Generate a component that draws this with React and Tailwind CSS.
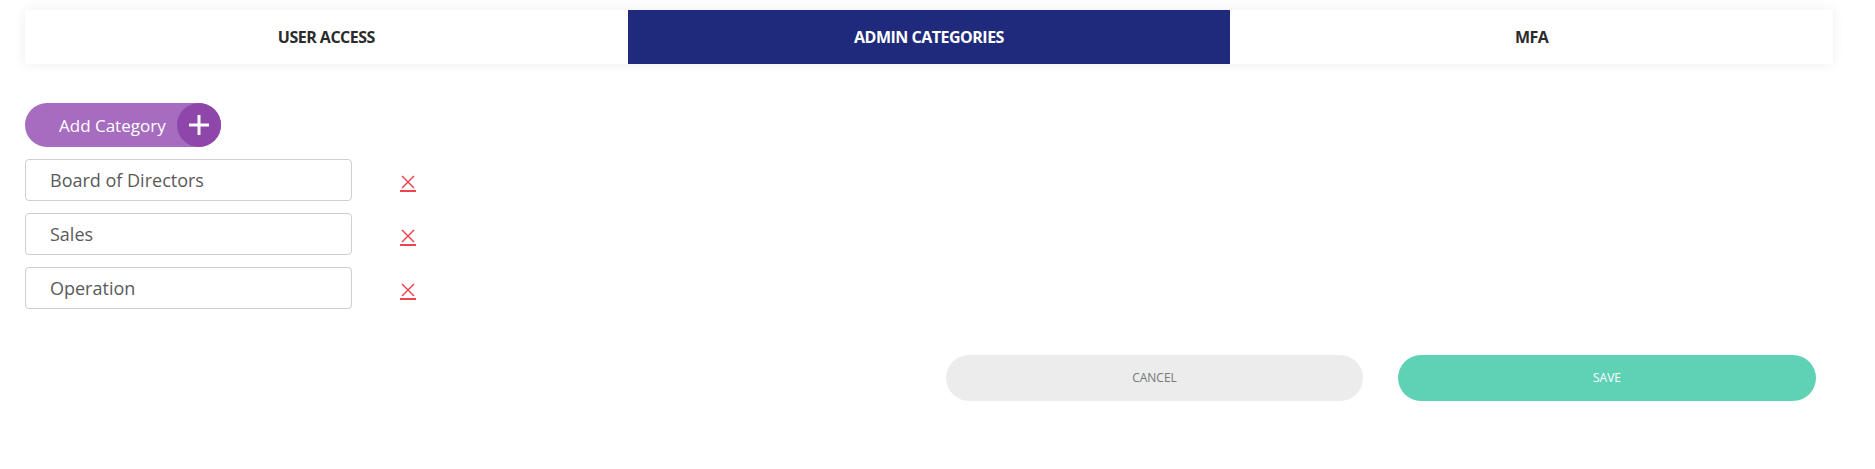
import React from "react";

const categories = ["Board of Directors", "Sales", "Operation"];

function RemoveIcon() {
  return (
    <button type="button" className="flex flex-col items-center w-[16px] mt-[6px]">
      <svg width="16" height="14" viewBox="0 0 16 14" className="block">
        <line x1="2" y1="1" x2="14" y2="13" stroke="#f0434b" strokeWidth="1.4" />
        <line x1="14" y1="1" x2="2" y2="13" stroke="#f0434b" strokeWidth="1.4" />
      </svg>
      <span className="block w-[16px] h-[2px] bg-[#f0434b] mt-[1px]" />
    </button>
  );
}

export default function App() {
  return (
    <div
      className="w-full min-h-[469px] bg-white"
      style={{ fontFamily: '"Open Sans", "Noto Sans", sans-serif' }}
    >
      <div className="px-[25px] pt-[10px] pr-[42px]">
        <div className="flex h-[54px] bg-white shadow-[0_0_12px_rgba(0,0,0,0.07)]">
          <div className="flex-1 flex items-center justify-center text-[16px] font-bold tracking-[-0.5px] text-[#2b2b2b]">
            USER ACCESS
          </div>
          <div className="flex-1 flex items-center justify-center text-[16px] font-bold tracking-[-0.5px] text-white bg-[#1f2a7c]">
            ADMIN CATEGORIES
          </div>
          <div className="flex-1 flex items-center justify-center text-[16px] font-bold tracking-[-0.5px] text-[#2b2b2b]">
            MFA
          </div>
        </div>
      </div>

      <div className="px-[25px] pt-[39px]">
        <button
          type="button"
          className="flex items-center h-[44px] w-[196px] rounded-full bg-[#a66cc0] text-white"
        >
          <span className="flex-1 pl-[34px] text-[17px] text-left leading-none">Add Category</span>
          <span className="flex items-center justify-center w-[44px] h-[44px] rounded-full bg-[#8e46aa]">
            <svg width="24" height="24" viewBox="0 0 24 24">
              <line x1="12" y1="2" x2="12" y2="22" stroke="white" strokeWidth="3" />
              <line x1="2" y1="12" x2="22" y2="12" stroke="white" strokeWidth="3" />
            </svg>
          </span>
        </button>

        <div className="flex flex-col gap-[12px] mt-[12px]">
          {categories.map((c) => (
            <div key={c} className="flex items-center">
              <div className="w-[327px] h-[42px] flex items-center pl-[24px] border border-[#cfcfcf] rounded-[4px] text-[18px] text-[#5a5a5a]">
                {c}
              </div>
              <div className="ml-[48px]">
                <RemoveIcon />
              </div>
            </div>
          ))}
        </div>
      </div>

      <div className="flex justify-end gap-[35px] pr-[59px] mt-[46px]">
        <button
          type="button"
          className="w-[417px] h-[46px] rounded-full bg-[#ececec] text-[12px] text-[#777777]"
        >
          CANCEL
        </button>
        <button
          type="button"
          className="w-[418px] h-[46px] rounded-full bg-[#5fd1b5] text-[12px] text-white"
        >
          SAVE
        </button>
      </div>
    </div>
  );
}
